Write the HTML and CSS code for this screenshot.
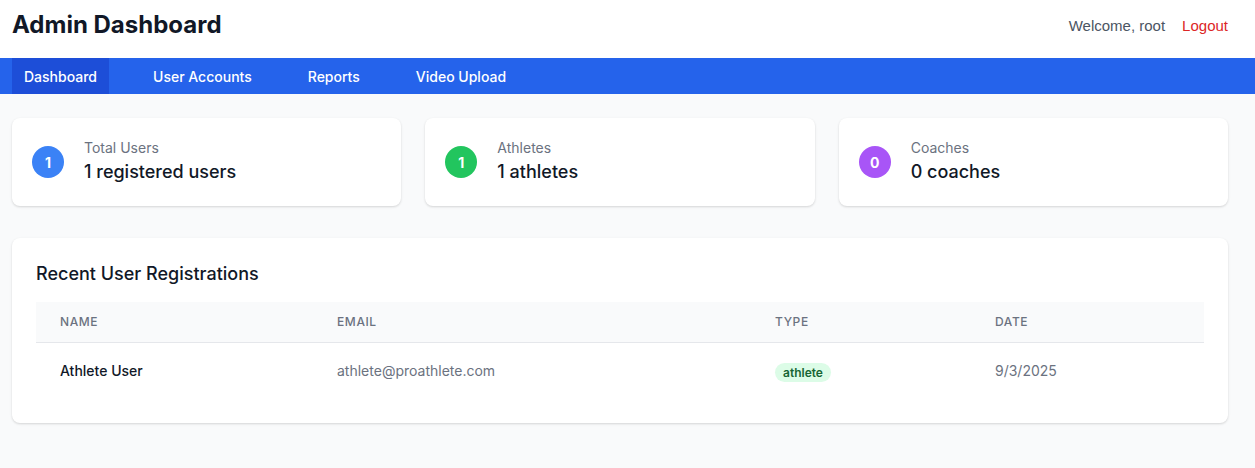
FILE: index.html
```html
<!DOCTYPE html>
<html lang="en">
<head>
<meta charset="utf-8">
<title>Admin Dashboard</title>
<link rel="stylesheet" href="styles.css">
</head>
<body>
<header class="topbar">
  <h1 class="title">Admin Dashboard</h1>
  <div class="user-area">
    <span class="welcome">Welcome, root</span>
    <a class="logout" href="#">Logout</a>
  </div>
</header>
<nav class="nav">
  <a class="nav-link active" href="#">Dashboard</a>
  <a class="nav-link" href="#">User Accounts</a>
  <a class="nav-link" href="#">Reports</a>
  <a class="nav-link" href="#">Video Upload</a>
</nav>
<main class="main">
  <section class="stats">
    <div class="stat-card">
      <div class="badge-circle blue">1</div>
      <div class="stat-text">
        <div class="stat-label">Total Users</div>
        <div class="stat-value">1 registered users</div>
      </div>
    </div>
    <div class="stat-card">
      <div class="badge-circle green">1</div>
      <div class="stat-text">
        <div class="stat-label">Athletes</div>
        <div class="stat-value">1 athletes</div>
      </div>
    </div>
    <div class="stat-card">
      <div class="badge-circle purple">0</div>
      <div class="stat-text">
        <div class="stat-label">Coaches</div>
        <div class="stat-value">0 coaches</div>
      </div>
    </div>
  </section>
  <section class="panel">
    <h2 class="panel-title">Recent User Registrations</h2>
    <table class="table">
      <thead>
        <tr>
          <th class="c-name">Name</th>
          <th class="c-email">Email</th>
          <th class="c-type">Type</th>
          <th class="c-date">Date</th>
        </tr>
      </thead>
      <tbody>
        <tr>
          <td class="name">Athlete User</td>
          <td class="muted">athlete@proathlete.com</td>
          <td><span class="pill">athlete</span></td>
          <td class="muted">9/3/2025</td>
        </tr>
      </tbody>
    </table>
  </section>
</main>
</body>
</html>
```
FILE: styles.css
```css
* { box-sizing: border-box; }
html, body { margin: 0; padding: 0; }
body {
  font-family: Inter, "Noto Sans", sans-serif;
  background: #f9fafb;
  color: #111827;
  width: 1255px;
  height: 468px;
  overflow: hidden;
}
.topbar {
  background: #fff;
  height: 58px;
  display: flex;
  align-items: center;
  justify-content: space-between;
  padding: 0 27px 8px 12px;
}
.title {
  margin: 0;
  font-size: 24px;
  font-weight: 700;
  line-height: 32px;
  color: #111827;
}
.user-area {
  display: flex;
  align-items: center;
  gap: 17px;
  font-family: "Liberation Sans", Arial, sans-serif;
  font-size: 15px;
}
.welcome { color: #4b5563; }
.logout { color: #dc2626; text-decoration: none; }
.nav {
  background: #2563eb;
  height: 36px;
  display: flex;
  gap: 32px;
  padding: 0 12px;
}
.nav-link {
  color: #fff;
  text-decoration: none;
  font-size: 14px;
  font-weight: 500;
  padding: 0 12px;
  display: flex;
  align-items: center;
}
.nav-link.active { background: #1d4ed8; }
.main {
  padding: 24px 27px 0 12px;
}
.stats {
  display: grid;
  grid-template-columns: repeat(3, 1fr);
  gap: 24px;
  margin-bottom: 32px;
}
.stat-card {
  background: #fff;
  border-radius: 8px;
  box-shadow: 0 1px 3px rgba(0,0,0,0.1), 0 1px 2px rgba(0,0,0,0.06);
  padding: 20px;
  display: flex;
  align-items: center;
  gap: 20px;
  height: 88px;
}
.badge-circle {
  width: 32px;
  height: 32px;
  border-radius: 50%;
  color: #fff;
  font-weight: 700;
  font-size: 14px;
  display: flex;
  align-items: center;
  justify-content: center;
  flex-shrink: 0;
}
.blue { background: #3b82f6; }
.green { background: #22c55e; }
.purple { background: #a855f7; }
.stat-label {
  font-size: 14px;
  line-height: 20px;
  color: #6b7280;
}
.stat-value {
  font-size: 18px;
  line-height: 28px;
  font-weight: 500;
  color: #111827;
}
.panel {
  background: #fff;
  border-radius: 8px;
  box-shadow: 0 1px 3px rgba(0,0,0,0.1), 0 1px 2px rgba(0,0,0,0.06);
  padding: 24px;
}
.panel-title {
  margin: 0 0 12px;
  font-size: 18px;
  line-height: 24px;
  font-weight: 500;
  color: #111827;
  padding-bottom: 4px;
}
.table {
  width: 100%;
  border-collapse: collapse;
}
.table th {
  background: #f9fafb;
  text-align: left;
  font-size: 12px;
  font-weight: 500;
  color: #6b7280;
  text-transform: uppercase;
  letter-spacing: 0.05em;
  height: 40px;
  padding: 0 24px;
  border-bottom: 1px solid #e5e7eb;
}
.c-name { width: 277px; }
.c-email { width: 438px; }
.c-type { width: 220px; }
.table td {
  font-size: 14px;
  line-height: 20px;
  padding: 18px 24px;
}
.name { font-weight: 500; color: #111827; }
.muted { color: #6b7280; }
.pill {
  display: inline-block;
  background: #dcfce7;
  color: #166534;
  font-size: 12px;
  font-weight: 600;
  line-height: 19px;
  padding: 0 8px;
  border-radius: 9999px;
  position: relative;
  top: 1px;
}
```
